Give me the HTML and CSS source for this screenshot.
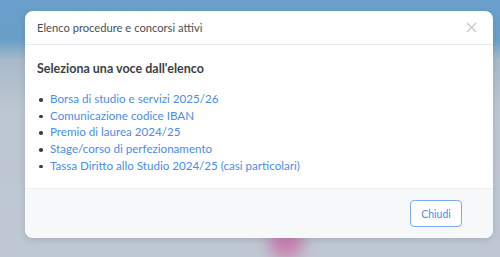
FILE: index.html
```html
<!DOCTYPE html>
<html lang="it">
<head>
    <meta charset="UTF-8">
    <meta name="viewport" content="width=device-width, initial-scale=1.0">
    <title>Elenco procedure e concorsi attivi</title>
    <link rel="stylesheet" href="styles.css">
</head>
<body>
    <div class="backdrop">
        <div class="blob"></div>
    </div>

    <div class="modal">
        <div class="modal-header">
            <span class="modal-title">Elenco procedure e concorsi attivi</span>
            <button class="close-btn" aria-label="Chiudi">
                <svg width="11" height="11" viewBox="0 0 11 11">
                    <path d="M1 1L10 10M10 1L1 10" stroke="#c3c8cf" stroke-width="1.3" fill="none"/>
                </svg>
            </button>
        </div>
        <div class="modal-body">
            <h2>Seleziona una voce dall'elenco</h2>
            <ul class="proc-list">
                <li><a href="#">Borsa di studio e servizi 2025/26</a></li>
                <li><a href="#">Comunicazione codice IBAN</a></li>
                <li><a href="#">Premio di laurea 2024/25</a></li>
                <li><a href="#">Stage/corso di perfezionamento</a></li>
                <li><a href="#">Tassa Diritto allo Studio 2024/25 (casi particolari)</a></li>
            </ul>
        </div>
        <div class="modal-footer">
            <button class="btn-close">Chiudi</button>
        </div>
    </div>
</body>
</html>
```

FILE: styles.css
```css
* {
    margin: 0;
    padding: 0;
    box-sizing: border-box;
}

body {
    font-family: Lato, "Noto Sans", Arial, sans-serif;
    height: 257px;
    overflow: hidden;
    background: linear-gradient(180deg, #6a9fcb 0px, #68a0c8 40px, #a9b9c9 60px, #bcc6d1 110px, #bfc8d2 257px);
    padding: 11px 7px 0 25px;
}

.backdrop {
    position: absolute;
    inset: 0;
    overflow: hidden;
}

.blob {
    position: absolute;
    left: 268px;
    top: 228px;
    width: 36px;
    height: 30px;
    border-radius: 50%;
    background: #c77fb0;
    filter: blur(7px);
}

.modal {
    position: relative;
    width: 468px;
    height: 227px;
    background: #fff;
    border-radius: 8px;
    box-shadow: 0 2px 6px rgba(60, 70, 90, 0.18);
    display: flex;
    flex-direction: column;
    overflow: hidden;
}

.modal-header {
    height: 34px;
    display: flex;
    align-items: center;
    justify-content: space-between;
    padding: 0 16px 0 12px;
    border-bottom: 1px solid #e9ecef;
}

.modal-title {
    font-size: 11.2px;
    color: #4b4f56;
}

.close-btn {
    border: none;
    background: none;
    display: flex;
    cursor: pointer;
}

.modal-body {
    flex: 1;
    padding: 15px 12px 0 12px;
}

.modal-body h2 {
    font-size: 12.5px;
    font-weight: 700;
    color: #3a3f45;
    line-height: 18px;
    margin-bottom: 13px;
}

.proc-list {
    list-style: none;
}

.proc-list li {
    position: relative;
    padding-left: 13px;
    font-size: 11.6px;
    line-height: 16.7px;
}

.proc-list li::before {
    content: "";
    position: absolute;
    left: 2px;
    top: 7px;
    width: 3.5px;
    height: 3.5px;
    border-radius: 50%;
    background: #3a3f45;
}

.proc-list a {
    color: #4a8cf0;
    text-decoration: none;
}

.modal-footer {
    height: 50px;
    background: #f7f8fa;
    border-top: 1px solid #eef0f3;
    display: flex;
    align-items: center;
    justify-content: flex-end;
    padding: 0 31px 0 0;
}

.btn-close {
    width: 52px;
    height: 27px;
    border: 1px solid #7aaaf3;
    border-radius: 4px;
    background: #fff;
    color: #4a8cf0;
    font-family: inherit;
    font-size: 10.5px;
    cursor: pointer;
}
```
